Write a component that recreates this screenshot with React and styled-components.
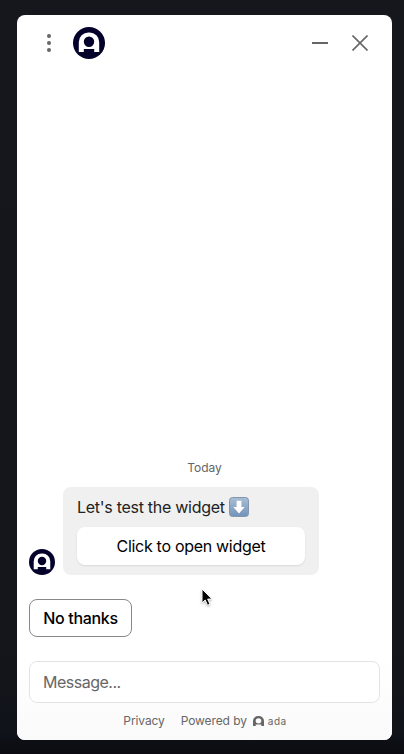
import React from 'react';
import styled, { createGlobalStyle } from 'styled-components';

const GlobalStyle = createGlobalStyle`
  *, *::before, *::after { box-sizing: border-box; }
  html, body { margin: 0; }
  body { background: #15161b; overflow: hidden; }
  button, input { font: inherit; letter-spacing: inherit; }
`;

const Page = styled.div`
  height: 754px;
  padding: 15px 12px 14px 17px;
  background: linear-gradient(#16171c, #15161b 85%, #10131a 97%, #0b0b11);
  font-family: Inter, sans-serif;
  font-size: 16px;
  letter-spacing: -0.3px;
  color: #222;
`;

const Widget = styled.main`
  position: relative;
  display: flex;
  flex-direction: column;
  height: 725px;
  border-radius: 8px;
  background: #fff;
  overflow: hidden;
`;

const Header = styled.header`
  display: flex;
  align-items: center;
  height: 56px;
  padding: 0 12px 0 20px;
`;

const Spacer = styled.div`
  flex: 1;
`;

const IconButton = styled.button`
  display: grid;
  place-items: center;
  width: ${(p) => p.$width || 40}px;
  height: 40px;
  padding: 0;
  border: 0;
  background: none;
  color: #666;
`;

const HeaderLogo = styled.div`
  display: flex;
  margin-left: 12px;
`;

const Conversation = styled.section`
  flex: 1;
  display: flex;
  flex-direction: column;
  justify-content: flex-end;
  padding: 0 12px;
`;

const DateLabel = styled.div`
  height: 20px;
  margin-bottom: 9px;
  line-height: 20px;
  text-align: center;
  font-size: 12px;
  letter-spacing: -0.05px;
  color: #666;
`;

const MessageRow = styled.div`
  display: flex;
  align-items: flex-end;
  gap: 8px;
`;

const Bubble = styled.div`
  width: 256px;
  height: 88px;
  padding: 9px 14px 10px;
  border-radius: 8px;
  background: #f0f0f0;
`;

const BubbleText = styled.div`
  display: flex;
  align-items: center;
  gap: 4px;
  height: 22px;
  margin-bottom: 9px;
  line-height: 22px;
  letter-spacing: -0.28px;
  white-space: nowrap;
`;

const WidgetButton = styled.button`
  display: block;
  width: 100%;
  height: 38px;
  padding: 0;
  border: 0;
  border-radius: 8px;
  background: #fff;
  box-shadow: 0 1px 2px rgba(0, 0, 0, 0.1);
  color: #000;
`;

const QuickReply = styled.button`
  align-self: flex-start;
  width: 103px;
  height: 38px;
  margin: 24px 0;
  padding: 0;
  border: 1px solid #888;
  border-radius: 8px;
  background: #fff;
  color: #000;
  && { font-weight: 500; }
`;

const Composer = styled.div`
  height: 79px;
  padding: 0 12px;
  background: linear-gradient(#fff, #fafafa);
`;

const MessageInput = styled.input`
  display: block;
  width: 100%;
  height: 42px;
  padding: 0 13px;
  border: 1px solid #e3e3e3;
  border-radius: 8px;
  background: #fff;
  outline: none;
  && { letter-spacing: -0.5px; }
  &::placeholder { color: #666; opacity: 1; }
`;

const Footer = styled.footer`
  display: flex;
  justify-content: center;
  align-items: center;
  gap: 16px;
  height: 35px;
  padding-left: 1px;
  font-size: 12px;
  letter-spacing: -0.1px;
  color: #666;
`;

const Powered = styled.div`
  display: flex;
  align-items: center;
  gap: 6px;
`;

const Brand = styled.span`
  display: flex;
  align-items: center;
  gap: 4px;
  font-size: 10px;
  letter-spacing: 0.5px;
`;

const Pointer = styled.svg`
  position: absolute;
  left: 182px;
  top: 571px;
  filter: drop-shadow(0 1px 1px rgba(0, 0, 0, 0.3));
`;

const archPath =
  'M5.8 25V15a9.6 9.6 0 0 1 9.6-9.6h1.2a9.6 9.6 0 0 1 9.6 9.6v10h-5v-3H10.8v3ZM16 9.6a5.2 5.2 0 1 0 0 10.4a5.2 5.2 0 0 0 0-10.4Z';

function Avatar({ size }) {
  return (
    <svg width={size} height={size} viewBox="0 0 32 32" aria-label="Ada">
      <circle cx="16" cy="16" r="16" fill="#04022a" />
      <path d={archPath} fill="#fff" fillRule="evenodd" />
    </svg>
  );
}

function DownArrow() {
  return (
    <svg width="20" height="20" viewBox="0 0 20 20" aria-label="Down arrow">
      <defs>
        <linearGradient id="tile" x1="0" y1="0" x2="0" y2="1">
          <stop offset="0" stopColor="#a9bfd6" />
          <stop offset="1" stopColor="#7293b9" />
        </linearGradient>
      </defs>
      <rect x=".5" y=".5" width="19" height="19" rx="3" fill="url(#tile)" stroke="#8196ae" />
      <path d="M7.6 3.7h4.8v6.2h3.3L10 16.6 4.3 9.9h3.3Z" fill="#fff" />
    </svg>
  );
}

export default function App() {
  return (
    <Page>
      <GlobalStyle />
      <Widget>
        <Header>
          <IconButton $width={24} aria-label="Options">
            <svg width="24" height="24" viewBox="0 0 24 24" fill="currentColor">
              <circle cx="12" cy="5" r="2" />
              <circle cx="12" cy="12" r="2" />
              <circle cx="12" cy="19" r="2" />
            </svg>
          </IconButton>
          <HeaderLogo><Avatar size={32} /></HeaderLogo>
          <Spacer />
          <IconButton aria-label="Minimize">
            <svg width="16" height="16" viewBox="0 0 16 16">
              <path d="M0 8h16" stroke="currentColor" strokeWidth="2" />
            </svg>
          </IconButton>
          <IconButton aria-label="Close">
            <svg width="16" height="16" viewBox="0 0 16 16">
              <path d="m.5.5 15 15m0-15-15 15" stroke="currentColor" strokeWidth="1.6" />
            </svg>
          </IconButton>
        </Header>
        <Conversation>
          <DateLabel>Today</DateLabel>
          <MessageRow>
            <Avatar size={26} />
            <Bubble>
              <BubbleText>Let's test the widget <DownArrow /></BubbleText>
              <WidgetButton>Click to open widget</WidgetButton>
            </Bubble>
          </MessageRow>
          <QuickReply>No thanks</QuickReply>
        </Conversation>
        <Composer>
          <MessageInput placeholder="Message..." />
          <Footer>
            <span>Privacy</span>
            <Powered>
              <span>Powered by</span>
              <Brand>
                <svg width="11" height="10" viewBox="5.8 5.3 20.4 19.7" preserveAspectRatio="none">
                  <path d={archPath} fill="currentColor" fillRule="evenodd" />
                </svg>
                ada
              </Brand>
            </Powered>
          </Footer>
        </Composer>
        <Pointer width="16" height="22" viewBox="0 0 16 22">
          <path d="M3 3v14l3.2-3 2.3 5.3 2.5-1.1-2.3-5.1H13Z" fill="#000" stroke="#fff" strokeWidth="1" />
        </Pointer>
      </Widget>
    </Page>
  );
}
